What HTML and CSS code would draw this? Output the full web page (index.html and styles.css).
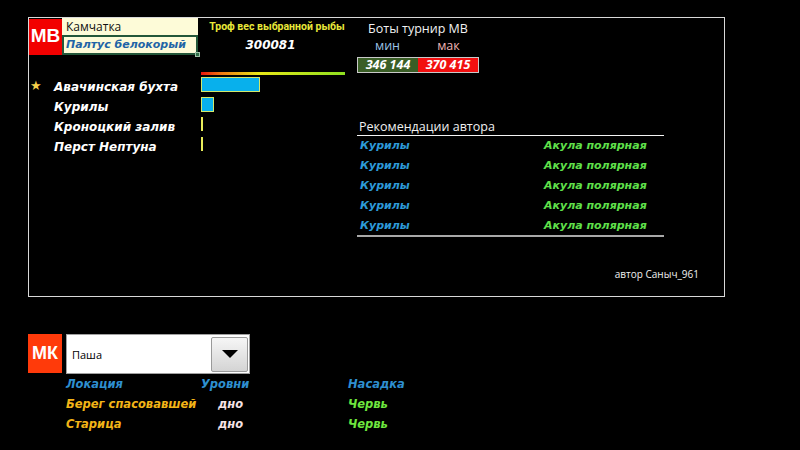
FILE: index.html
```html
<!DOCTYPE html>
<html lang="ru">
<head>
<meta charset="utf-8">
<title>Турнир</title>
<link rel="stylesheet" href="styles.css">
</head>
<body>
<div class="page">
  <section class="frame">
    <div class="cols">
      <div class="col-a">
        <div class="hdr">
          <div class="badge badge-mb">МВ</div>
          <div class="cells">
            <div class="cell-region">Камчатка</div>
            <div class="cell-fish">Палтус белокорый<span class="handle"></span></div>
          </div>
        </div>
        <ul class="locs">
          <li><span class="star">★</span>Авачинская бухта</li>
          <li>Курилы</li>
          <li>Кроноцкий залив</li>
          <li>Перст Нептуна</li>
        </ul>
      </div>
      <div class="col-b">
        <div class="tw-title">Троф вес выбранной рыбы</div>
        <div class="tw-val">300081</div>
        <div class="grad"></div>
        <div class="bars">
          <div class="bar-row"><div class="bar" style="width:59px"></div></div>
          <div class="bar-row"><div class="bar" style="width:13px"></div></div>
          <div class="bar-row"><div class="bar bar-thin"></div></div>
          <div class="bar-row"><div class="bar bar-thin"></div></div>
        </div>
      </div>
      <div class="col-c">
        <div class="bots">
          <div class="bots-title">Боты турнир МВ</div>
          <div class="bots-head"><span class="h-min">мин</span><span class="h-max">мак</span></div>
          <div class="bots-box"><span class="v-min">346 144</span><span class="v-max">370 415</span></div>
        </div>
        <div class="recs">
          <div class="recs-title">Рекомендации автора</div>
          <div class="rec"><span class="rec-loc">Курилы</span><span class="rec-fish">Акула полярная</span></div>
          <div class="rec"><span class="rec-loc">Курилы</span><span class="rec-fish">Акула полярная</span></div>
          <div class="rec"><span class="rec-loc">Курилы</span><span class="rec-fish">Акула полярная</span></div>
          <div class="rec"><span class="rec-loc">Курилы</span><span class="rec-fish">Акула полярная</span></div>
          <div class="rec"><span class="rec-loc">Курилы</span><span class="rec-fish">Акула полярная</span></div>
        </div>
      </div>
    </div>
    <div class="author">автор Саныч_961</div>
  </section>

  <section class="mk">
    <div class="mk-top">
      <div class="badge badge-mk">МК</div>
      <div class="select">
        <span class="select-val">Паша</span>
        <span class="select-btn"><span class="tri"></span></span>
      </div>
    </div>
    <div class="mk-table">
      <div class="mk-row mk-head"><span class="c-loc">Локация</span><span class="c-lvl">Уровни</span><span class="c-bait">Насадка</span></div>
      <div class="mk-row"><span class="c-loc loc-y">Берег спасовавшей</span><span class="c-lvl lvl-v">дно</span><span class="c-bait bait-g">Червь</span></div>
      <div class="mk-row"><span class="c-loc loc-y">Старица</span><span class="c-lvl lvl-v">дно</span><span class="c-bait bait-g">Червь</span></div>
    </div>
  </section>
</div>
</body>
</html>
```

FILE: styles.css
```css
* { box-sizing: border-box; }
html, body { margin: 0; padding: 0; background: #000; }
body { width: 800px; height: 450px; overflow: hidden; font-family: "DejaVu Sans", sans-serif; color: #fff; }

.page { padding: 17px 0 0 28px; }

.frame {
  width: 697px;
  height: 280px;
  border: 1px solid #d8d8d8;
  display: flex;
  flex-direction: column;
}
.cols { display: flex; }

/* column A */
.col-a { width: 171px; }
.hdr { display: flex; }
.badge {
  width: 33px;
  display: flex; align-items: center; justify-content: center;
  font-family: "Liberation Sans", sans-serif; font-weight: bold; color: #fff;
}
.badge-mb { height: 36px; margin-top: 1px; background: #f20000; font-size: 19px; padding-bottom: 3px; }
.cells { width: 136px; }
.cell-region {
  height: 17px; background: #fdfbd8; color: #111;
  font-family: "Open Sans", sans-serif; font-size: 12px; line-height: 17px; padding-left: 4px;
}
.cell-fish {
  position: relative;
  height: 20px; background: #fdfbd8; border: 2px solid #23573a;
  color: #1f64a6; font-style: italic; font-weight: bold; font-size: 11px; line-height: 16px; padding-left: 2px;
}
.handle { position: absolute; right: -4px; bottom: -4px; width: 5px; height: 5px; background: #2f7048; border: 1px solid #9fc2a8; }

.locs { list-style: none; margin: 22px 0 0; padding: 0; }
.locs li {
  position: relative; height: 20px; line-height: 20px; padding-left: 25px;
  font-weight: bold; font-style: italic; font-size: 12px; color: #fff;
}
.star { position: absolute; left: 1px; top: -1px; color: #f5cf4a; font-size: 13px; font-style: normal; }

/* column B */
.col-b { width: 145px; }
.tw-title {
  height: 18px; line-height: 18px; text-align: center; padding-left: 9px;
  font-family: Roboto, sans-serif; font-weight: bold; font-size: 10.5px; color: #e8e83a;
}
.tw-val {
  height: 18px; line-height: 18px; text-align: center; padding-right: 4px;
  font-weight: bold; font-style: italic; font-size: 12px; color: #fff;
}
.grad {
  margin: 18px 0 0 1px; height: 3px;
  background: linear-gradient(to right, #e8140a 0%, #f07810 14%, #e8e818 40%, #8ee020 100%);
}
.bars { margin-top: 1px; }
.bar-row { height: 20px; padding: 1px 0 0 1px; }
.bar { height: 15px; background: #08b0ec; border: 1px solid #d2e86a; }
.bar-thin { width: 2px; height: 14px; background: #e8ec5a; border: 0; }

/* column C */
.col-c { width: 307px; margin-left: 12px; }
.bots { width: 122px; font-family: "Open Sans", sans-serif; }
.bots-title { margin-top: 2px; height: 18px; line-height: 18px; text-align: center; font-size: 12.5px; color: #f2f2f2; }
.bots-head { display: flex; height: 16px; line-height: 16px; font-size: 12.5px; }
.bots-head span { flex: 1; text-align: center; }
.h-min { color: #9cc3e6; }
.h-max { color: #efb4b4; }
.bots-box { display: flex; margin-top: 3px; height: 16px; border: 1px solid #c9c9c9; }
.bots-box span {
  flex: 1; text-align: center; line-height: 14px;
  font-family: "Open Sans", sans-serif; font-style: italic; font-weight: bold; font-size: 12.5px; color: #fff;
}
.v-min { background: #3a5e26; }
.v-max { background: #f21010; }

.recs { margin-top: 45px; }
.recs-title {
  height: 18px; line-height: 17px; padding-left: 2px;
  font-family: "Open Sans", sans-serif; font-size: 12.5px; color: #f0f0f0;
  border-bottom: 1px solid #f4f4f4;
}
.rec { display: flex; height: 20px; line-height: 20px; font-weight: bold; font-style: italic; font-size: 11px; }
.rec:last-child { border-bottom: 2px solid #a8a8a8; height: 21px; line-height: 19px; }
.rec-loc { width: 187px; padding-left: 3px; color: #2d9ad8; }
.rec-fish { color: #5fe04a; }

.author {
  margin-top: auto; padding: 0 25px 15px 0; text-align: right;
  font-family: "Open Sans", sans-serif; font-size: 10px; color: #f0f0f0;
}

/* bottom section */
.mk { margin-top: 37px; }
.mk-top { display: flex; gap: 4px; }
.badge-mk { width: 34px; height: 39px; background: #ff3a0a; font-size: 18px; }
.select {
  width: 184px; height: 40px; background: #fff; border: 1px solid #a0a0a0;
  display: flex; align-items: center; justify-content: space-between;
  padding: 0 1px 0 5px;
}
.select-val { font-family: "Open Sans", sans-serif; font-size: 11px; color: #000; }
.select-btn {
  width: 37px; height: 35px; border: 1px solid #9a9a9a; border-radius: 2px;
  background: linear-gradient(#f6f6f6, #d4d4d4);
  display: flex; align-items: center; justify-content: center;
}
.tri { width: 0; height: 0; border-left: 8px solid transparent; border-right: 8px solid transparent; border-top: 8px solid #000; }

.mk-table { margin-left: 38px; }
.mk-row { display: flex; height: 20px; line-height: 20px; font-weight: bold; font-style: italic; font-size: 11.5px; }
.c-loc { width: 135px; }
.c-lvl { width: 147px; }
.mk-head span { color: #2e8fd0; }
.loc-y { color: #f3b417; }
.lvl-v { color: #f4e2e6; padding-left: 17px; }
.bait-g { color: #6ee63e; }
```
